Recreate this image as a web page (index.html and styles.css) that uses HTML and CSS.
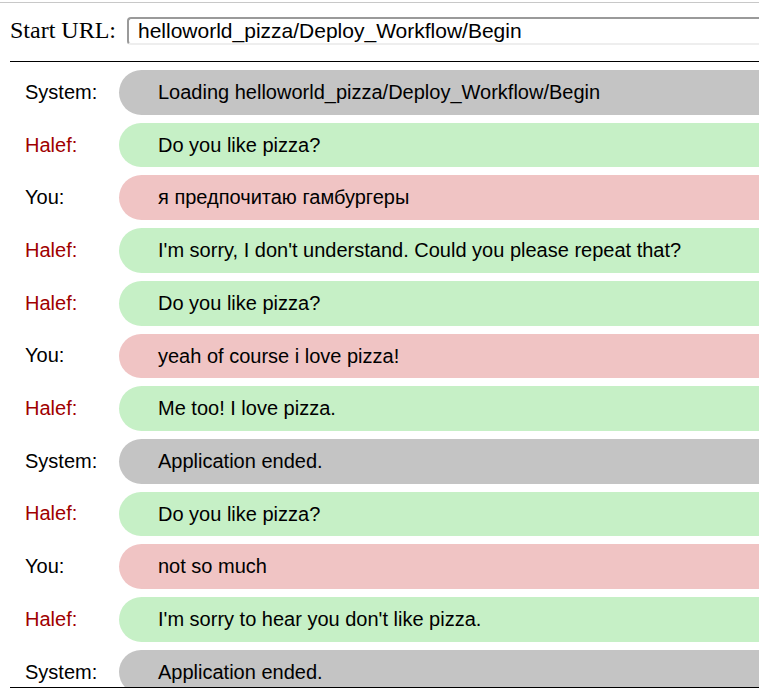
FILE: index.html
```html
<!DOCTYPE html>
<html>
<head>
<meta charset="utf-8">
<link rel="stylesheet" href="styles.css">
</head>
<body>
<div class="topline"></div>
<div class="urlbar">
  <label class="urllabel">Start URL:</label>
  <div class="urlinput">helloworld_pizza/Deploy_Workflow/Begin</div>
</div>
<div class="chat">
  <div class="row"><span class="who">System:</span><div class="bubble sys">Loading helloworld_pizza/Deploy_Workflow/Begin</div></div>
  <div class="row"><span class="who halef">Halef:</span><div class="bubble bot">Do you like pizza?</div></div>
  <div class="row"><span class="who">You:</span><div class="bubble you">я предпочитаю гамбургеры</div></div>
  <div class="row"><span class="who halef">Halef:</span><div class="bubble bot">I'm sorry, I don't understand. Could you please repeat that?</div></div>
  <div class="row"><span class="who halef">Halef:</span><div class="bubble bot">Do you like pizza?</div></div>
  <div class="row"><span class="who">You:</span><div class="bubble you">yeah of course i love pizza!</div></div>
  <div class="row"><span class="who halef">Halef:</span><div class="bubble bot">Me too! I love pizza.</div></div>
  <div class="row"><span class="who">System:</span><div class="bubble sys">Application ended.</div></div>
  <div class="row"><span class="who halef">Halef:</span><div class="bubble bot">Do you like pizza?</div></div>
  <div class="row"><span class="who">You:</span><div class="bubble you">not so much</div></div>
  <div class="row"><span class="who halef">Halef:</span><div class="bubble bot">I'm sorry to hear you don't like pizza.</div></div>
  <div class="row"><span class="who">System:</span><div class="bubble sys">Application ended.</div></div>
</div>
</body>
</html>
```
FILE: styles.css
```css
html, body {
  margin: 0;
  padding: 0;
  overflow: hidden;
  background: #fff;
}
body {
  width: 759px;
  height: 694px;
  font-family: "Liberation Sans", Arial, sans-serif;
  color: #000;
}
.topline {
  height: 1px;
  margin-top: 2px;
  background: #c8c8c8;
}
.urlbar {
  display: flex;
  align-items: center;
  padding: 13px 0 0 10px;
  height: 29px;
  white-space: nowrap;
}
.urllabel {
  font-family: "Liberation Serif", "Times New Roman", serif;
  font-size: 24px;
  width: 117px;
  flex: none;
}
.urlinput {
  flex: none;
  width: 700px;
  height: 24px;
  box-sizing: content-box;
  border-top: 2px solid #9a9a9a;
  border-left: 2px solid #9a9a9a;
  border-bottom: 2px solid #eeeeee;
  border-radius: 4px 0 0 4px;
  padding: 0 0 0 9px;
  font-size: 21px;
  line-height: 24px;
}
.chat {
  margin: 16px 0 0 10px;
  width: 820px;
  height: 627px;
  box-sizing: border-box;
  border-top: 1px solid #000;
  border-bottom: 1px solid #000;
  overflow: hidden;
  padding-top: 8px;
}
.row {
  display: flex;
  align-items: center;
  margin-bottom: 8px;
  font-size: 20px;
}
.who {
  width: 94px;
  padding-left: 15px;
  flex: none;
}
.who.halef {
  color: #a00000;
}
.bubble {
  flex: 1;
  padding: 11px 0 11px 39px;
  border-radius: 23px;
  line-height: 22.7px;
  white-space: nowrap;
}
.sys { background: #c4c4c4; }
.bot { background: #c6f0c6; }
.you { background: #f0c4c4; }
```
